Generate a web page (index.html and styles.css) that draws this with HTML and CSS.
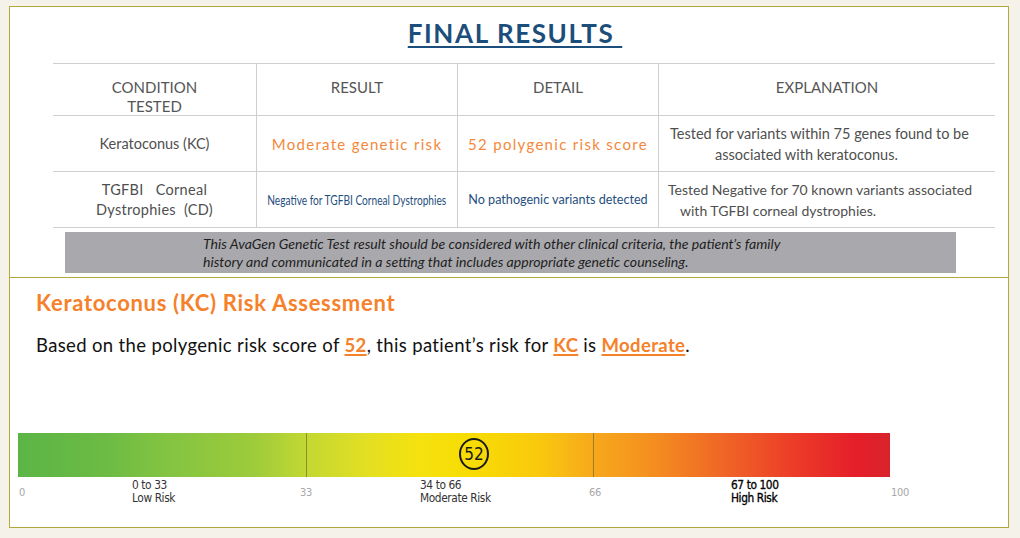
FILE: index.html
```html
<!DOCTYPE html>
<html>
<head>
<meta charset="utf-8">
<link rel="stylesheet" href="styles.css">
</head>
<body>
<div class="frame">
  <section class="results">
    <h1 class="title"><span>FINAL RESULTS&nbsp;</span></h1>
    <div class="grid">
      <div class="cell head">CONDITION<br>TESTED</div>
      <div class="cell head">RESULT</div>
      <div class="cell head">DETAIL</div>
      <div class="cell head last">EXPLANATION</div>

      <div class="cell cond">Keratoconus (KC)</div>
      <div class="cell orange">Moderate genetic risk</div>
      <div class="cell orange">52 polygenic risk score</div>
      <div class="cell expl left last"><span class="line l1">Tested for variants within 75 genes found to be</span><span class="line l2">associated with keratoconus.</span></div>

      <div class="cell cond wide"><span class="line">TGFBI&nbsp;&nbsp; Corneal</span><span class="line">Dystrophies&nbsp; (CD)</span></div>
      <div class="cell blue narrow"><span class="squeeze">Negative for TGFBI Corneal Dystrophies</span></div>
      <div class="cell blue">No pathogenic variants detected</div>
      <div class="cell expl small left last"><span class="line l3">Tested Negative for 70 known variants associated</span><span class="line l4">with TGFBI corneal dystrophies.</span></div>
    </div>
    <div class="note">This AvaGen Genetic Test result should be considered with other clinical criteria, the patient’s family<br>history and communicated in a setting that includes appropriate genetic counseling.</div>
  </section>
  <section class="assessment">
    <h2 class="heading">Keratoconus (KC) Risk Assessment</h2>
    <p class="statement">Based on the polygenic risk score of <b class="hl">52</b>, this patient’s risk for <b class="hl">KC</b> is <b class="hl">Moderate</b>.</p>
    <div class="meter">
      <div class="bar">
        <div class="seg s1"></div>
        <div class="seg s2"></div>
        <div class="seg s3"></div>
        <div class="marker">52</div>
      </div>
      <div class="scale">
        <div class="col c1"><span class="tick">0</span><span class="range">0 to 33<br>Low Risk</span></div>
        <div class="col c2"><span class="tick">33</span><span class="range">34 to 66<br>Moderate Risk</span></div>
        <div class="col c3"><span class="tick">66</span><span class="range strong">67 to 100<br>High Risk</span></div>
        <div class="col c4"><span class="tick">100</span></div>
      </div>
    </div>
  </section>
</div>
</body>
</html>
```

FILE: styles.css
```css
* { box-sizing: border-box; }
html, body { margin: 0; padding: 0; }
body {
  background: #f5f2ea;
  width: 1020px;
  height: 538px;
  overflow: hidden;
  font-family: Lato, "Open Sans", sans-serif;
}
.frame {
  margin: 6px 0 0 9px;
  width: 1000px;
  height: 522px;
  border: 1px solid #b3a83a;
  background: #fff;
  display: flex;
  flex-direction: column;
}
.results {
  height: 271px;
  border-bottom: 1px solid #b3a83a;
  padding-top: 11px;
}
.title {
  margin: 0 0 14px;
  text-align: center;
  font-size: 26px;
  line-height: 31px;
  font-weight: 700;
  letter-spacing: 1.6px;
  color: #1c4e7b;
  padding-left: 12px;
}
.title span {
  text-decoration: underline;
  text-decoration-thickness: 2px;
  text-underline-offset: 3px;
}
.grid {
  margin-left: 43px;
  width: 942px;
  display: grid;
  grid-template-columns: 204px 201px 201px 336px;
  grid-template-rows: 52px 56px 56px;
  border-bottom: 1px solid #cfcfcf;
}
.cell {
  border-top: 1px solid #cfcfcf;
  border-right: 1px solid #cfcfcf;
  display: flex;
  flex-direction: column;
  align-items: center;
  justify-content: center;
  text-align: center;
  color: #4f4f4f;
  font-size: 14px;
  line-height: 20px;
}
.cell.last { border-right: none; }
.cell.head {
  font-size: 15px;
  line-height: 19px;
  justify-content: flex-start;
  padding-top: 14px;
  color: #555;
}
.cell.cond { font-size: 14.5px; }
.cell.cond.wide { letter-spacing: 0.3px; }
.cell.orange {
  color: #f4883a;
  font-size: 15px;
  letter-spacing: 1.3px;
}
.cell.blue {
  color: #1f4f7e;
  font-size: 12.6px;
}
.squeeze {
  display: inline-block;
  white-space: nowrap;
  font-size: 13px;
  transform: scaleX(0.78);
}
.cell.expl {
  font-size: 14.5px;
  line-height: 21px;
}
.cell.expl.small { font-size: 14px; }
.cell.left {
  align-items: flex-start;
  text-align: left;
}
.line { display: block; white-space: nowrap; }
.l1 { padding-left: 11px; }
.l2 { padding-left: 56px; }
.l3 { padding-left: 9px; }
.l4 { padding-left: 21px; }
.note {
  margin: 4px 0 0 55px;
  width: 891px;
  height: 41px;
  background: #a9a9ad;
  padding: 3px 0 0 138px;
  font-style: italic;
  font-size: 14.1px;
  line-height: 18px;
  color: #1e1e1e;
}
.assessment {
  flex: 1;
  padding-top: 12px;
}
.heading {
  margin: 0 0 0 26px;
  font-size: 22px;
  line-height: 26px;
  font-weight: 700;
  letter-spacing: 0.7px;
  color: #f5812a;
}
.statement {
  margin: 18px 0 0 26px;
  font-size: 18.5px;
  line-height: 22px;
  letter-spacing: 0.35px;
  color: #111;
}
.hl {
  color: #f5812a;
  font-weight: 700;
  text-decoration: underline;
  text-decoration-thickness: 2px;
  text-underline-offset: 2px;
}
.meter {
  margin: 77px 0 0 8px;
}
.bar {
  position: relative;
  display: flex;
  width: 872px;
  height: 44px;
  background: linear-gradient(90deg,
    #5bb546 0%, #6cbb44 10%, #80c342 16%, #9dcb3b 27%, #c2d832 33%,
    #e3df22 40%, #f5e20e 46%, #f8dc04 52%, #f9c80e 60%, #f7a81c 66%,
    #f5921e 72%, #f06a26 80%, #ec3c28 89%, #e51e2a 96%, #d8232a 100%);
}
.seg { height: 100%; }
.s1 { width: 289px; border-right: 1px solid rgba(90, 90, 40, 0.55); }
.s2 { width: 287px; border-right: 1px solid rgba(90, 90, 40, 0.55); }
.s3 { flex: 1; }
.marker {
  position: absolute;
  left: calc(52.3% - 15px);
  top: 5px;
  width: 30px;
  height: 32px;
  border: 2px solid #1a1a1a;
  border-radius: 50%;
  display: flex;
  align-items: center;
  justify-content: center;
  font-family: "DejaVu Sans Condensed", "DejaVu Sans", sans-serif;
  font-stretch: condensed;
  font-size: 17px;
  color: #1a1a1a;
}
.scale {
  display: grid;
  grid-template-columns: 289px 287px 296px 40px;
  margin-top: 2px;
  font-family: "DejaVu Sans Condensed", "DejaVu Sans", sans-serif;
  font-stretch: condensed;
}
.col {
  display: grid;
  align-items: center;
}
.c1 { grid-template-columns: 114px auto; }
.c2 { grid-template-columns: 113px auto; }
.c3 { grid-template-columns: 137px auto; }
.tick {
  font-size: 11px;
  color: #a8a8a8;
  letter-spacing: -0.3px;
}
.c1 .tick { margin-left: 1px; }
.c2 .tick { margin-left: -7px; }
.c3 .tick { margin-left: -5px; }
.c4 .tick { margin-left: 1px; }
.range {
  font-size: 11.8px;
  line-height: 13px;
  letter-spacing: -0.4px;
  color: #333;
}
.range.strong { color: #000; -webkit-text-stroke: 0.3px #000; }
```
